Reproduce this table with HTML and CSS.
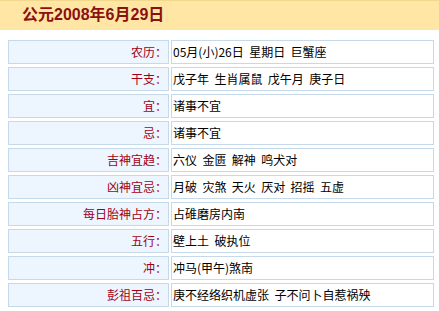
FILE: index.html
```html
<!DOCTYPE html>
<html lang="zh-CN">
<head>
<meta charset="utf-8">
<link rel="stylesheet" href="styles.css">
</head>
<body>
<div class="header">公元2008年6月29日</div>
<div class="table">
  <div class="row"><div class="label">农历：</div><div class="value">05月(小)26日&nbsp; 星期日&nbsp; 巨蟹座</div></div>
  <div class="row"><div class="label">干支：</div><div class="value">戊子年&nbsp; 生肖属鼠&nbsp; 戊午月&nbsp; 庚子日</div></div>
  <div class="row"><div class="label">宜：</div><div class="value">诸事不宜</div></div>
  <div class="row"><div class="label">忌：</div><div class="value">诸事不宜</div></div>
  <div class="row"><div class="label">吉神宜趋：</div><div class="value">六仪&nbsp; 金匮&nbsp; 解神&nbsp; 鸣犬对</div></div>
  <div class="row"><div class="label">凶神宜忌：</div><div class="value">月破&nbsp; 灾煞&nbsp; 天火&nbsp; 厌对&nbsp; 招摇&nbsp; 五虚</div></div>
  <div class="row"><div class="label">每日胎神占方：</div><div class="value">占碓磨房内南</div></div>
  <div class="row"><div class="label">五行：</div><div class="value">壁上土&nbsp; 破执位</div></div>
  <div class="row"><div class="label">冲：</div><div class="value">冲马(甲午)煞南</div></div>
  <div class="row"><div class="label">彭祖百忌：</div><div class="value">庚不经络织机虚张&nbsp; 子不问卜自惹祸殃</div></div>
</div>
</body>
</html>
```
FILE: styles.css
```css
html, body {
  margin: 0;
  padding: 0;
  background: #ffffff;
}
body {
  font-family: "Noto Sans CJK SC", "Liberation Sans", sans-serif;
  font-size: 12px;
  color: #000000;
}
.header {
  box-sizing: border-box;
  height: 30px;
  border-top: 1px solid #f2d88c;
  background: #ffe6a4;
  padding-left: 22px;
  font-size: 16px;
  font-weight: bold;
  line-height: 28px;
  color: #8b1010;
  font-family: "Liberation Sans", "Noto Sans CJK SC", sans-serif;
}
.table {
  display: flex;
  flex-direction: column;
  gap: 3px;
  margin-top: 10px;
  padding-left: 8px;
}
.row {
  display: flex;
  gap: 2px;
  height: 24px;
}
.label,
.value {
  box-sizing: border-box;
  height: 24px;
  border: 1px solid #c5d9ea;
  line-height: 22px;
  white-space: nowrap;
}
.label {
  width: 161px;
  background: #edf5ff;
  color: #a00016;
  text-align: right;
  padding-right: 1px;
}
.value {
  width: 263px;
  background: #ffffff;
  padding-left: 1px;
}
```
